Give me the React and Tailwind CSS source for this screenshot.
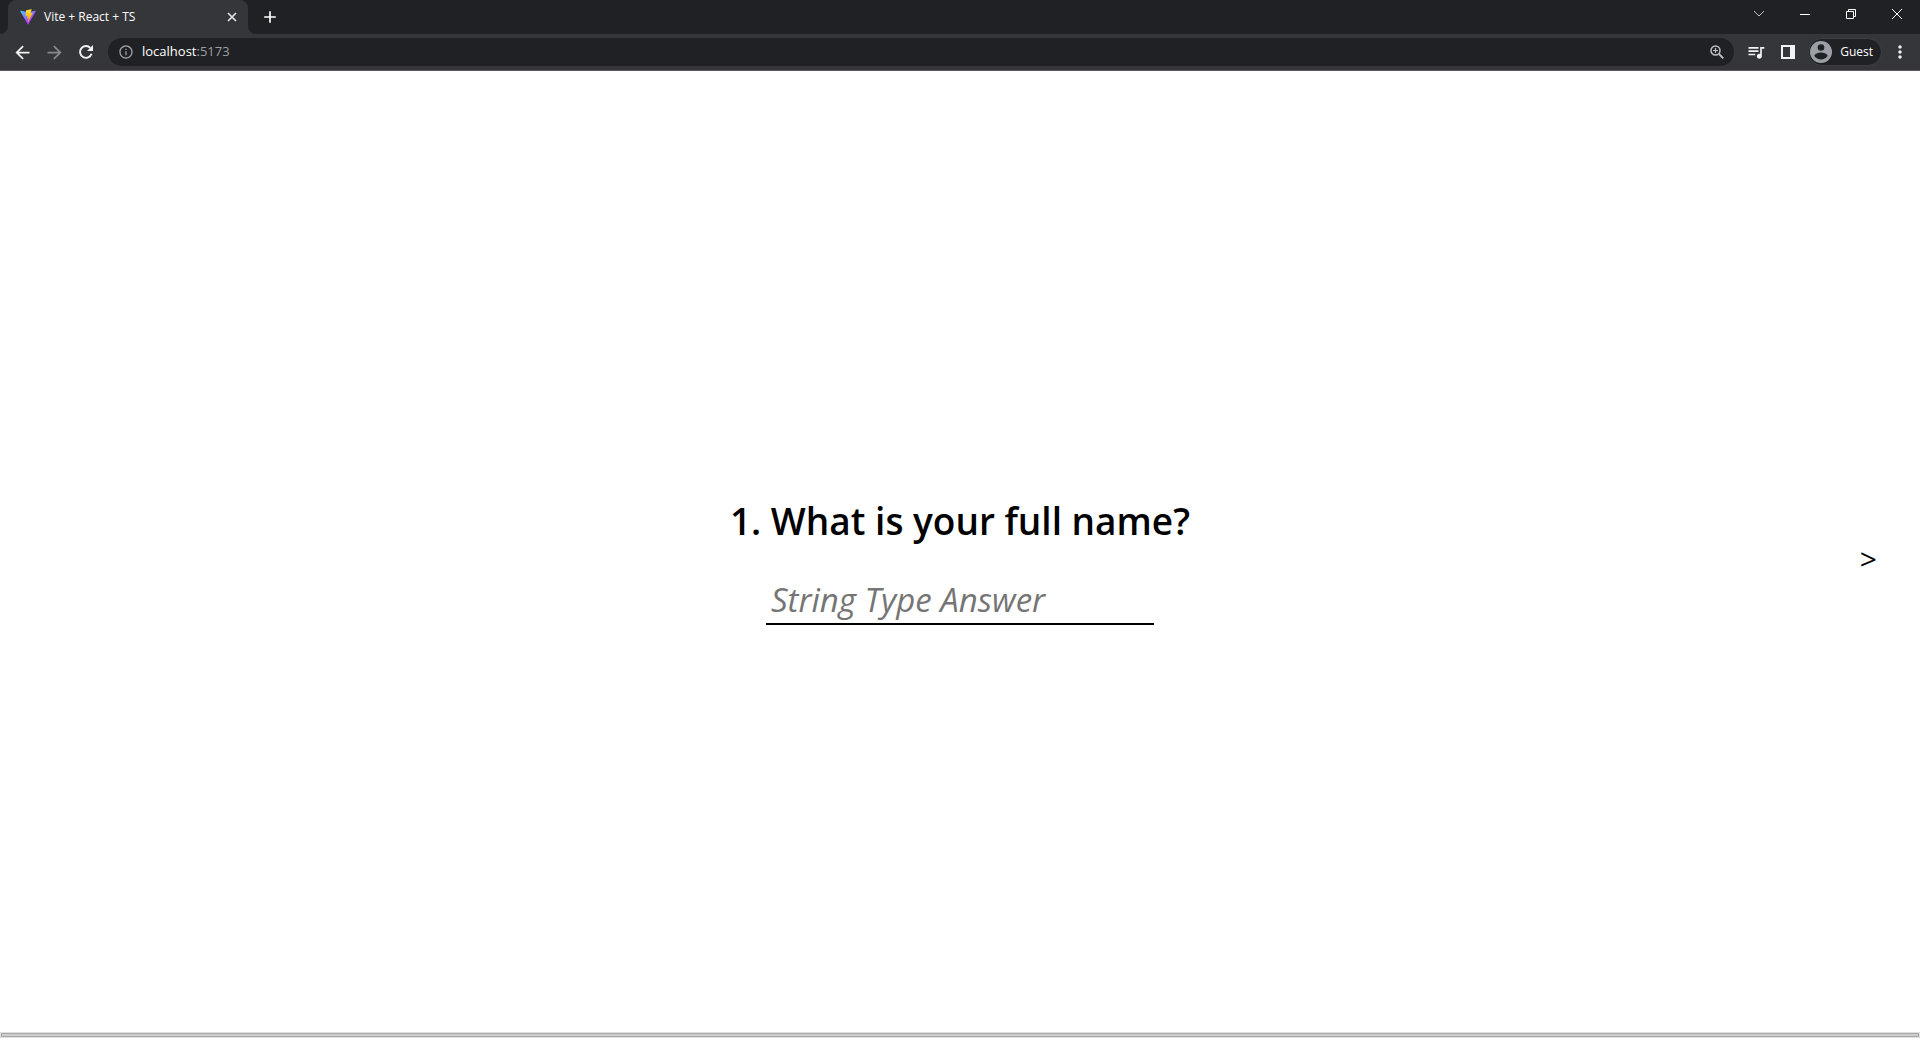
import React from "react";
import {
  MdArrowBack,
  MdArrowForward,
  MdInfoOutline,
  MdQueueMusic,
  MdMoreVert,
  MdAdd,
} from "react-icons/md";

function ViteLogo() {
  return (
    <svg className="size-4 shrink-0" viewBox="0 0 410 404" fill="none" aria-hidden="true">
      <defs>
        <linearGradient id="shield" x1="6" y1="33" x2="235" y2="344" gradientUnits="userSpaceOnUse">
          <stop stopColor="#41D1FF" />
          <stop offset="1" stopColor="#BD34FE" />
        </linearGradient>
        <linearGradient id="bolt" x1="194" y1="9" x2="236" y2="293" gradientUnits="userSpaceOnUse">
          <stop stopColor="#FFEA83" />
          <stop offset="0.08" stopColor="#FFDD35" />
          <stop offset="1" stopColor="#FFA800" />
        </linearGradient>
      </defs>
      <path
        d="M399.6 59.5 215.6 388.5c-3.8 6.8-13.5 6.8-17.4.1L10.6 59.6c-4.2-7.4 2.1-16.3 10.4-14.8l184.2 32.9c1.2.2 2.4.2 3.5 0l180.4-32.8c8.3-1.5 14.6 7.3 10.5 14.6Z"
        fill="url(#shield)"
      />
      <path
        d="M293 1.6 156.8 28.3c-2.2.4-3.9 2.3-4 4.6l-8.4 141.5c-.2 3.3 2.9 5.9 6.1 5.2l37.9-8.8c3.6-.8 6.8 2.3 6 5.9l-11.3 55.2c-.8 3.7 2.7 6.9 6.3 5.8l23.5-7.1c3.6-1.1 7.1 2.1 6.3 5.8l-17.9 86.6c-1.1 5.4 6.1 8.4 9.1 3.8l2-3.1 111-221.5c1.9-3.7-1.3-8-5.4-7.2l-39 7.5c-3.7.7-6.8-2.7-5.8-6.3l25.5-88.3c1-3.6-2.1-7-5.7-6.3Z"
        fill="url(#bolt)"
      />
    </svg>
  );
}

const windowButtons = [
  { label: "Search tabs", path: "M5 6l5 5 5-5", tone: "text-[#bdc1c6]" },
  { label: "Minimize", path: "M5 9.500h10", tone: "text-white" },
  { label: "Restore", path: "M5.500 6.500h7v7h-7zM7.500 6.500v-2h7v7h-2", tone: "text-white" },
  { label: "Close window", path: "M5 4l10 10M15 4L5 14", tone: "text-white" },
];

function TabStrip() {
  return (
    <div className="flex h-[34px] items-stretch bg-[#202124]">
      <div className="flex w-2 bg-[#35363a]">
        <div className="flex-1 rounded-br-lg bg-[#202124]" />
      </div>
      <div className="flex w-60 items-center gap-2 rounded-t-lg bg-[#35363a] pr-2 pl-3">
        <ViteLogo />
        <span className="flex-1 text-[12px] text-white">Vite + React + TS</span>
        <button type="button" aria-label="Close tab" className="grid size-4 place-items-center text-[#e8eaed]">
          <svg className="size-2.5" viewBox="0 0 10 10" fill="none" stroke="currentColor" strokeWidth="1.600" aria-hidden="true">
            <path d="M1 1l8 8M9 1L1 9" />
          </svg>
        </button>
      </div>
      <div className="flex w-2 bg-[#35363a]">
        <div className="flex-1 rounded-bl-lg bg-[#202124]" />
      </div>
      <button type="button" aria-label="New tab" className="grid w-7 place-items-center text-white">
        <MdAdd className="size-5" />
      </button>
      <div className="flex-1" />
      {windowButtons.map(({ label, path, tone }) => (
        <button key={label} type="button" aria-label={label} className={`flex w-[46px] justify-center pt-[5px] ${tone}`}>
          <svg className="h-[18px] w-5" viewBox="0 0 20 18" fill="none" stroke="currentColor" aria-hidden="true">
            <path d={path} />
          </svg>
        </button>
      ))}
    </div>
  );
}

function Toolbar() {
  return (
    <div className="flex h-[37px] items-center border-b border-[#5c5a60] bg-[#35363a] pl-1.5 text-[#f1f3f4]">
      <button type="button" aria-label="Back" className="grid w-8 place-items-center">
        <MdArrowBack className="size-[21px]" />
      </button>
      <button type="button" aria-label="Forward" disabled className="grid w-8 place-items-center text-[#87888b]">
        <MdArrowForward className="size-[21px]" />
      </button>
      <button type="button" aria-label="Reload" className="grid w-8 place-items-center">
        <svg className="size-3.5" viewBox="0 0 14 14" fill="none" aria-hidden="true">
          <path d="M12.600 8.800A5.900 5.900 0 1 1 11.300 2.900" stroke="currentColor" strokeWidth="1.900" />
          <path d="M14 0v6H8z" fill="currentColor" />
        </svg>
      </button>
      <div className="ml-1.5 flex h-7 flex-1 items-center rounded-full bg-[#202124] px-2.5">
        <MdInfoOutline className="size-4 text-[#9aa0a6]" />
        <a href="http://localhost:5173" className="ml-2 flex-1 text-[13px] text-white">
          localhost<span className="text-[#9aa0a6]">:5173</span>
        </a>
        <button type="button" aria-label="Zoom" className="text-[#bdc1c6]">
          <svg className="size-3.5" viewBox="0 0 14 14" fill="none" stroke="currentColor" strokeWidth="1.500" aria-hidden="true">
            <circle cx="5.500" cy="5.500" r="4.500" />
            <path d="M9 9l4.300 4.300" strokeWidth="1.800" />
            <path d="M5.500 3v5M3 5.500h5" strokeWidth="1.200" />
          </svg>
        </button>
      </div>
      <button type="button" aria-label="Media controls" className="ml-1.5 grid w-8 place-items-center">
        <MdQueueMusic className="size-5" />
      </button>
      <button type="button" aria-label="Side panel" className="grid w-8 place-items-center">
        <svg className="size-3.5" viewBox="0 0 14 14" aria-hidden="true">
          <path fill="currentColor" fillRule="evenodd" d="M0 0h14v14H0zM2 2v10h7V2z" />
        </svg>
      </button>
      <button
        type="button"
        className="ml-1 flex h-7 items-center gap-2 rounded-full border border-[#3c4043] bg-[#202124] pr-2 pl-px text-[12px] text-white"
      >
        <svg className="size-[22px]" viewBox="0 0 22 22" aria-hidden="true">
          <circle cx="11" cy="11" r="11" fill="#9aa0a6" />
          <circle cx="11" cy="6.500" r="3.300" fill="#202124" />
          <path d="M4.400 15c0-2.200 4.400-3.400 6.600-3.400s6.600 1.200 6.600 3.400a7.900 7.900 0 0 1-13.200 0z" fill="#202124" />
        </svg>
        Guest
      </button>
      <button type="button" aria-label="Menu" className="mr-1 ml-0.5 grid w-8 place-items-center">
        <MdMoreVert className="size-5" />
      </button>
    </div>
  );
}

export default function App() {
  return (
    <div className="flex h-screen flex-col bg-white font-['Open_Sans','Noto_Sans',sans-serif] text-black">
      <header>
        <TabStrip />
        <Toolbar />
      </header>
      <main className="grid flex-1 grid-cols-[1fr_auto_1fr] items-center pt-3.5">
        <form className="col-start-2 flex flex-col items-center gap-7" onSubmit={(e) => e.preventDefault()}>
          <label htmlFor="full-name" className="text-[37px] leading-[56px] font-semibold">
            1. What is your full name?
          </label>
          <input
            id="full-name"
            type="text"
            placeholder="String Type Answer"
            className="h-12 w-[388px] border-b-2 border-black px-[5px] text-[33px] italic outline-none placeholder:text-[#757575]"
          />
        </form>
        <button type="button" aria-label="Next question" className="mr-[43px] justify-self-end text-[30px] leading-9">
          &gt;
        </button>
      </main>
      <div className="mb-0.5 h-1.5 bg-[#e0e0e0] px-px py-px">
        <div className="h-full border border-[#a8a8a8] bg-[#cdcdcd]" />
      </div>
    </div>
  );
}
